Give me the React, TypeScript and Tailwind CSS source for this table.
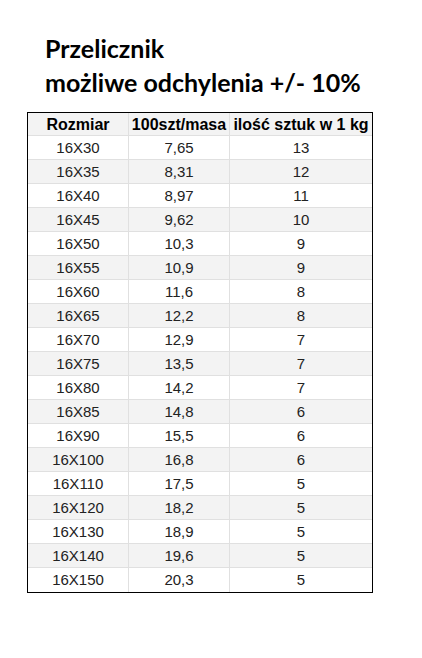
import React from "react";

const rows: [string, string, string][] = [
  ["16X30", "7,65", "13"],
  ["16X35", "8,31", "12"],
  ["16X40", "8,97", "11"],
  ["16X45", "9,62", "10"],
  ["16X50", "10,3", "9"],
  ["16X55", "10,9", "9"],
  ["16X60", "11,6", "8"],
  ["16X65", "12,2", "8"],
  ["16X70", "12,9", "7"],
  ["16X75", "13,5", "7"],
  ["16X80", "14,2", "7"],
  ["16X85", "14,8", "6"],
  ["16X90", "15,5", "6"],
  ["16X100", "16,8", "6"],
  ["16X110", "17,5", "5"],
  ["16X120", "18,2", "5"],
  ["16X130", "18,9", "5"],
  ["16X140", "19,6", "5"],
  ["16X150", "20,3", "5"],
];

export default function App() {
  return (
    <div className="w-[422px] h-[658px] bg-white">
      <div className="pt-[31px] pl-[45px] font-['Lato',sans-serif] font-bold text-[25px] leading-[34px] text-black">
        <div>Przelicznik</div>
        <div>możliwe odchylenia +/- 10%</div>
      </div>
      <div className="ml-[27px] mt-[13px] w-[346px] border border-black font-['Liberation_Sans',Arial,sans-serif]">
        <div className="flex h-[23px] bg-[#f3f3f3] border-b border-[#e0e0e0] text-[16px] font-bold text-black leading-[23px]">
          <div className="w-[101px] border-r border-[#e0e0e0] text-center">Rozmiar</div>
          <div className="w-[101px] border-r border-[#e0e0e0] text-center">100szt/masa</div>
          <div className="flex-1 text-center whitespace-nowrap">ilość sztuk w 1 kg</div>
        </div>
        {rows.map((r, i) => (
          <div
            key={r[0]}
            className={`flex h-[24px] text-[15px] text-[#222] leading-[23px] ${
              i % 2 === 1 ? "bg-[#f3f3f3]" : "bg-white"
            } ${i < rows.length - 1 ? "border-b border-[#e0e0e0]" : ""}`}
          >
            <div className="w-[101px] border-r border-[#e0e0e0] text-center">{r[0]}</div>
            <div className="w-[101px] border-r border-[#e0e0e0] text-center">{r[1]}</div>
            <div className="flex-1 text-center">{r[2]}</div>
          </div>
        ))}
      </div>
    </div>
  );
}
